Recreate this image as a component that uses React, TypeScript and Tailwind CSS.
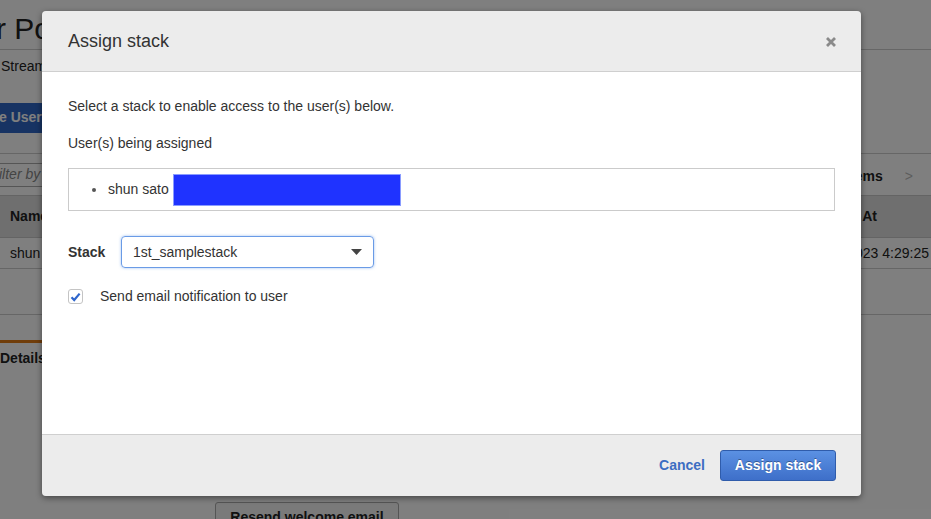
import { useState } from 'react';

function PageBehind() {
  return (
    <div className="absolute inset-0 bg-white text-[#222] font-['Liberation_Sans',Arial,sans-serif] overflow-hidden">
      {/* Title */}
      <div className="h-[50px] border-b border-[#ccc] flex items-center">
        <span className="text-[30px] leading-none -ml-[4px] pt-[8px] whitespace-nowrap">r Pool</span>
      </div>
      <div className="text-[14px] h-[32px] flex items-center pl-[1px] whitespace-nowrap">Streaming</div>
      <div className="h-[72px] border-b border-[#ccc] flex items-center">
        <div className="h-[30px] w-[70px] -ml-[8px] rounded-[3px] bg-[#2f67c6] text-white font-bold text-[14px] flex items-center pl-[7px] whitespace-nowrap">
          e User
        </div>
      </div>
      <div className="h-[41px] flex items-center justify-between">
        <div className="h-[24px] w-[120px] -ml-[4px] border border-[#aaa] rounded-[2px] flex items-center pl-[2px] text-[14px] italic text-[#888] whitespace-nowrap">
          ilter by
        </div>
        <div className="flex items-center gap-[22px] pr-[18px] text-[14px] font-bold pt-[3px]">
          <span>Items</span>
          <span className="text-[#bbb] font-normal">&gt;</span>
        </div>
      </div>
      <div className="h-[43px] bg-[#dedede] border-y border-[#c8c8c8] flex items-center justify-between text-[14px] font-bold px-[10px]">
        <span>Name</span>
        <span className="pr-[44px]">Created At</span>
      </div>
      <div className="h-[31px] border-b border-[#ccc] flex items-center justify-between text-[14px] pl-[10px]">
        <span>shun</span>
        <span className="pr-[2px]">11/24/2023 4:29:25</span>
      </div>
      <div className="h-[46px] border-b border-[#ccc]" />
      <div className="h-[25px]" />
      <div className="w-[80px] border-t-[3px] border-[#e07b15] pt-[5px] text-[14px] font-bold whitespace-nowrap">Details</div>
      <div className="mt-[133px] ml-[215px] w-[184px] h-[30px] border border-[#aaa] rounded-[3px] bg-[#f4f4f4] flex items-center justify-center text-[14px] font-bold">
        Resend welcome email
      </div>
    </div>
  );
}

export default function App() {
  const [notify, setNotify] = useState(true);

  return (
    <div className="relative w-[931px] h-[519px] overflow-hidden font-['Liberation_Sans',Arial,sans-serif]">
      <PageBehind />
      <div className="absolute inset-0 bg-black/50" />

      {/* Modal */}
      <div className="absolute left-[42px] top-[11px] w-[819px] h-[485px] rounded-[4px] overflow-hidden shadow-[0_2px_6px_rgba(0,0,0,0.45)] flex flex-col">
        <div className="h-[61px] shrink-0 bg-[#ececec] border-b border-[#cfcfcf] flex items-center justify-between pl-[26px] pr-[24px]">
          <h2 className="text-[18px] text-[#333]">Assign stack</h2>
          <svg width="12" height="12" viewBox="0 0 12 12" className="mt-[2px]">
            <path d="M2 2 L10 10 M10 2 L2 10" stroke="#8a8a8a" strokeWidth="2.8" strokeLinecap="butt" />
          </svg>
        </div>

        <div className="flex-1 bg-white px-[26px] pt-[24px] text-[14px] text-[#333]">
          <p className="leading-[20px]">Select a stack to enable access to the user(s) below.</p>
          <p className="leading-[20px] mt-[17px]">User(s) being assigned</p>
          <div className="mt-[15px] h-[43px] border border-[#cbcbcb] flex items-center pl-[23px]">
            <span className="w-[4px] h-[4px] rounded-full bg-[#555] mr-[12px]" />
            <span>shun sato</span>
            <span className="ml-[4px] w-[228px] h-[32px] bg-[#1f33ff] border border-[#8a9cff]" />
          </div>

          <div className="mt-[25px] flex items-center">
            <span className="font-bold w-[53px]">Stack</span>
            <div className="w-[253px] h-[32px] rounded-[4px] border border-[#6a9be6] shadow-[0_0_3px_rgba(80,140,230,0.55)] flex items-center justify-between pl-[11px] pr-[11px]">
              <span>1st_samplestack</span>
              <svg width="11" height="6" viewBox="0 0 11 6">
                <path d="M0 0 H11 L5.5 6 Z" fill="#444" />
              </svg>
            </div>
          </div>

          <label className="mt-[18px] flex items-center">
            <button
              type="button"
              onClick={() => setNotify((v) => !v)}
              className="w-[15px] h-[15px] rounded-[3px] border border-[#c4c4c4] bg-white flex items-center justify-center"
            >
              {notify && (
                <svg width="11" height="10" viewBox="0 0 11 10">
                  <path d="M1.5 5.2 L4.2 8 L9.6 1.6" stroke="#2f66cc" strokeWidth="2.2" fill="none" />
                </svg>
              )}
            </button>
            <span className="ml-[17px]">Send email notification to user</span>
          </label>
        </div>

        <div className="h-[62px] shrink-0 bg-[#ececec] border-t border-[#cfcfcf] flex items-center justify-end pr-[25px] gap-[15px]">
          <span className="text-[14px] font-bold text-[#3c6ec2]">Cancel</span>
          <button className="w-[116px] h-[31px] rounded-[3px] border border-[#2f5cab] bg-gradient-to-b from-[#5b91e3] to-[#3e6fc9] text-white text-[14px] font-bold [text-shadow:0_-1px_0_rgba(0,0,0,0.35)]">
            Assign stack
          </button>
        </div>
      </div>
    </div>
  );
}
